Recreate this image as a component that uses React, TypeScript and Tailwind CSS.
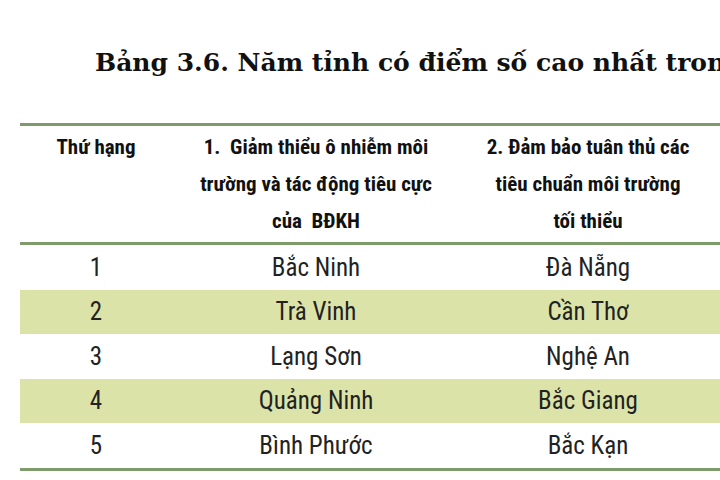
import React from "react";

const rows = [
  ["1", "Bắc Ninh", "Đà Nẵng"],
  ["2", "Trà Vinh", "Cần Thơ"],
  ["3", "Lạng Sơn", "Nghệ An"],
  ["4", "Quảng Ninh", "Bắc Giang"],
  ["5", "Bình Phước", "Bắc Kạn"],
];

export default function App() {
  return (
    <div className="w-[720px] h-[480px] overflow-hidden bg-white relative">
      <div className="pt-[45px] pl-[95px] h-[123px] whitespace-nowrap text-[25px] font-bold text-[#111] leading-[36px] font-['DejaVu_Serif',serif]">
        Bảng 3.6. Năm tỉnh có điểm số cao nhất trong từng chỉ số
      </div>
      <div className="ml-[20px] w-[760px] border-t-[3px] border-b-[3px] border-[#7e9b6b] font-['Roboto_Condensed','DejaVu_Sans_Condensed',Roboto,sans-serif] font-stretch-condensed">
        <div className="flex h-[119px] border-b-[3px] border-[#7e9b6b] text-[21px] font-bold text-[#111] leading-[37px]">
          <div className="w-[152px] pt-[3px] text-center">Thứ hạng</div>
          <div className="w-[288px] pt-[3px] text-center px-[20px]">
            1.&nbsp; Giảm thiểu ô nhiễm môi trường và tác động tiêu cực của&nbsp; BĐKH
          </div>
          <div className="w-[256px] pt-[3px] text-center px-[24px]">
            2. Đảm bảo tuân thủ các tiêu chuẩn môi trường tối thiểu
          </div>
          <div className="flex-1" />
        </div>
        {rows.map((r, i) => (
          <div
            key={i}
            className={`flex h-[44.6px] items-center text-[25px] text-[#222] ${i % 2 === 1 ? "bg-[#dce3a9]" : "bg-white"}`}
          >
            <div className="w-[152px] text-center">{r[0]}</div>
            <div className="w-[288px] text-center">{r[1]}</div>
            <div className="w-[256px] text-center">{r[2]}</div>
            <div className="flex-1" />
          </div>
        ))}
      </div>
    </div>
  );
}
